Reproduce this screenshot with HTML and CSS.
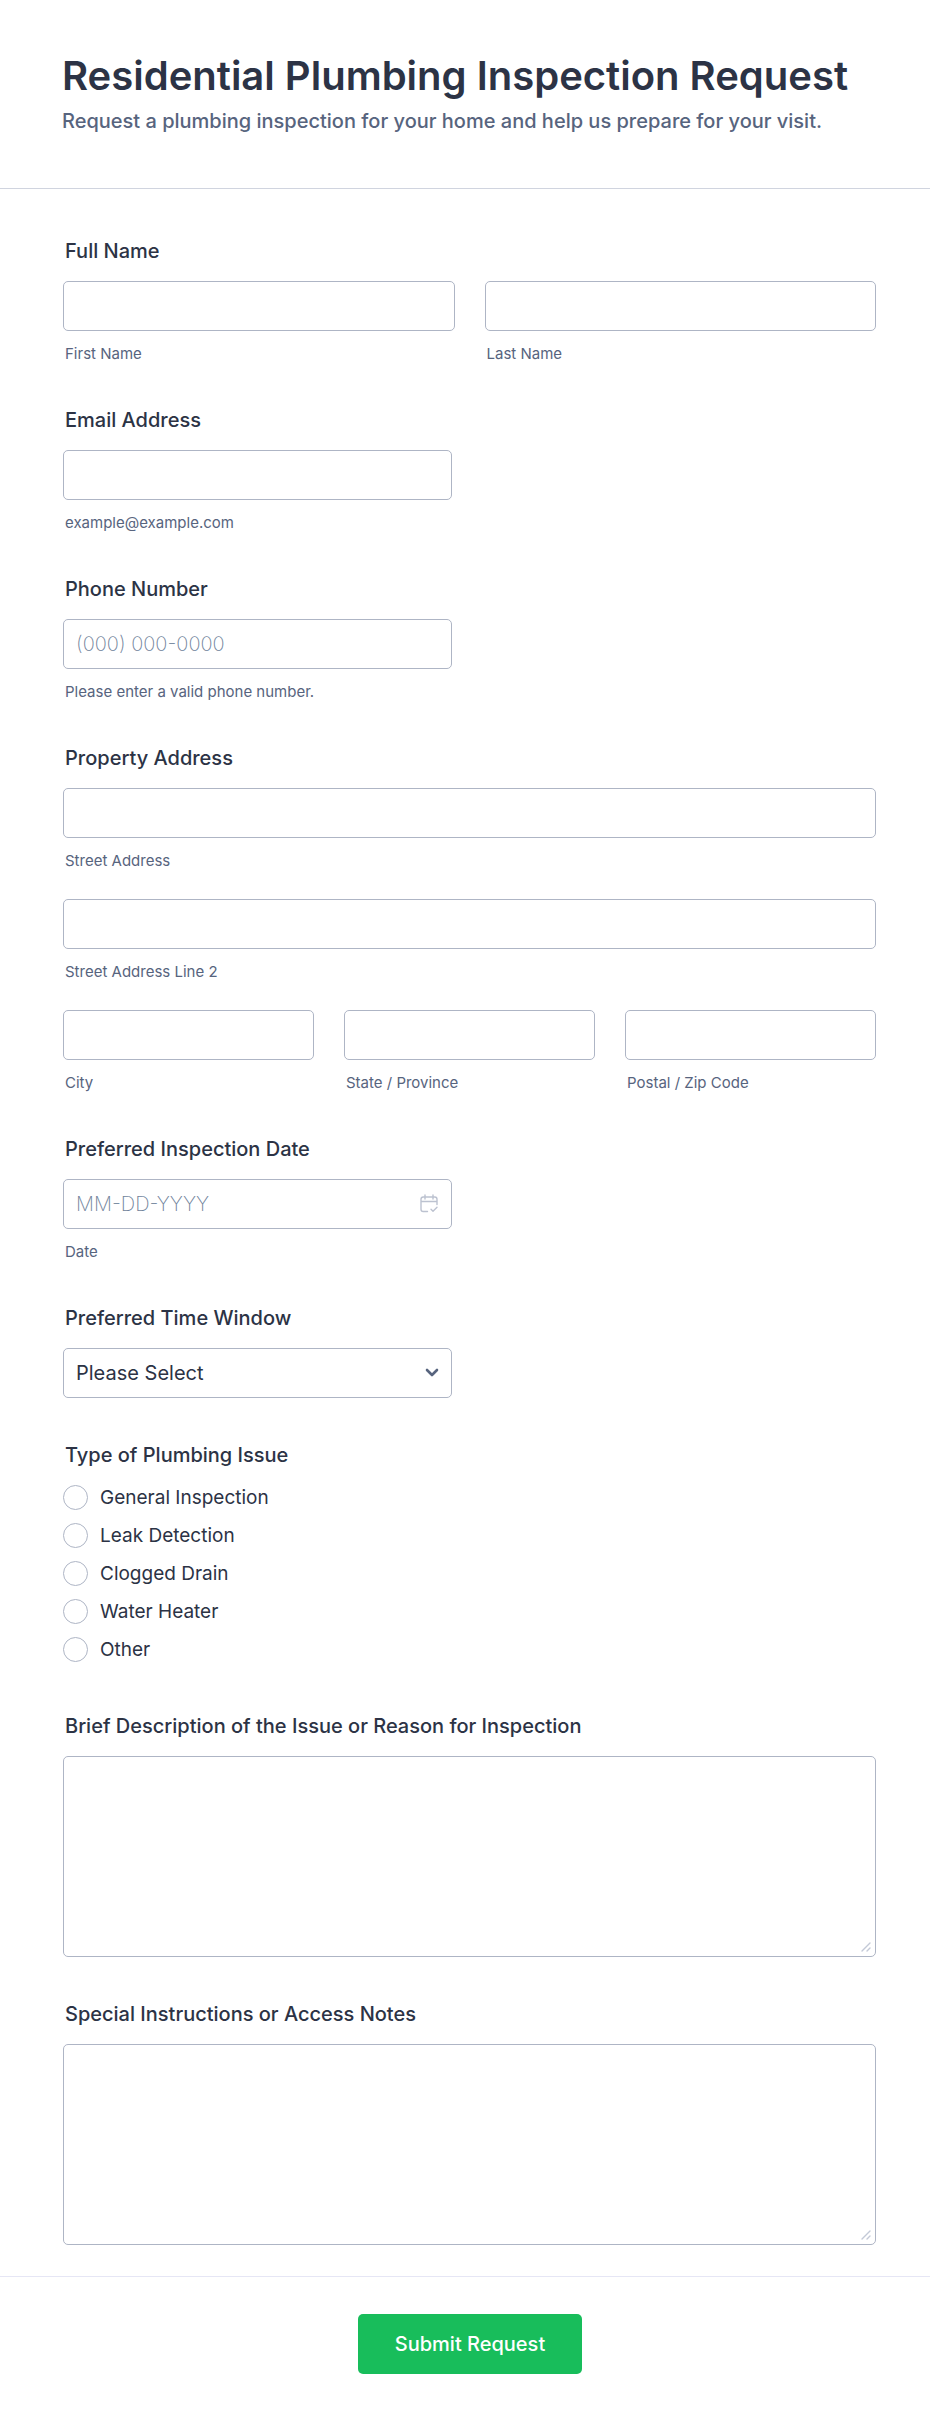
FILE: index.html
```html
<!DOCTYPE html>
<html lang="en">
<head>
<meta charset="utf-8">
<meta name="viewport" content="width=device-width, initial-scale=1">
<title>Residential Plumbing Inspection Request</title>
<link rel="stylesheet" href="styles.css">
</head>
<body>
<form class="form">
  <header class="form-header">
    <h1 class="title">Residential Plumbing Inspection Request</h1>
    <p class="subtitle">Request a plumbing inspection for your home and help us prepare for your visit.</p>
  </header>

  <div class="fields">
    <fieldset class="field">
      <legend class="label">Full Name</legend>
      <div class="row">
        <div class="cell"><input class="control" type="text" id="first"><label class="sublabel" for="first">First Name</label></div>
        <div class="cell"><input class="control" type="text" id="last"><label class="sublabel" for="last">Last Name</label></div>
      </div>
    </fieldset>

    <div class="field">
      <label class="label" for="email">Email Address</label>
      <div class="cell half"><input class="control" type="email" id="email" aria-describedby="email-hint"><span class="sublabel" id="email-hint">example@example.com</span></div>
    </div>

    <div class="field">
      <label class="label" for="phone">Phone Number</label>
      <div class="cell half"><input class="control" type="tel" id="phone" placeholder="(000) 000-0000" aria-describedby="phone-hint"><span class="sublabel" id="phone-hint">Please enter a valid phone number.</span></div>
    </div>

    <fieldset class="field">
      <legend class="label">Property Address</legend>
      <div class="rows">
        <div class="cell"><input class="control" type="text" id="street"><label class="sublabel" for="street">Street Address</label></div>
        <div class="cell"><input class="control" type="text" id="street2"><label class="sublabel" for="street2">Street Address Line 2</label></div>
        <div class="row">
          <div class="cell"><input class="control" type="text" id="city"><label class="sublabel" for="city">City</label></div>
          <div class="cell"><input class="control" type="text" id="state"><label class="sublabel" for="state">State / Province</label></div>
          <div class="cell"><input class="control" type="text" id="zip"><label class="sublabel" for="zip">Postal / Zip Code</label></div>
        </div>
      </div>
    </fieldset>

    <div class="field">
      <label class="label" for="date">Preferred Inspection Date</label>
      <div class="cell half">
        <div class="adorned">
          <input class="control" type="text" id="date" placeholder="MM-DD-YYYY" aria-describedby="date-hint">
          <svg class="adornment calendar" viewBox="0 0 18 19" aria-hidden="true"><path d="M7.5 17.5H3.2Q1 17.5 1 15.3V5.2Q1 3 3.2 3H14.8Q17 3 17 5.2V10.5M1 7.5H17M5 1V5M13 1V5M11 15.2L13 17.2L17 13.2"/></svg>
        </div>
        <span class="sublabel" id="date-hint">Date</span>
      </div>
    </div>

    <div class="field">
      <label class="label" for="time">Preferred Time Window</label>
      <div class="adorned half">
        <select class="control" id="time"><option>Please Select</option></select>
        <svg class="adornment chevron" viewBox="0 0 14 10" aria-hidden="true"><path d="M2 2L7 7L12 2"/></svg>
      </div>
    </div>

    <fieldset class="field">
      <legend class="label">Type of Plumbing Issue</legend>
      <div class="options">
        <label class="option"><input class="radio" type="radio" name="issue">General Inspection</label>
        <label class="option"><input class="radio" type="radio" name="issue">Leak Detection</label>
        <label class="option"><input class="radio" type="radio" name="issue">Clogged Drain</label>
        <label class="option"><input class="radio" type="radio" name="issue">Water Heater</label>
        <label class="option"><input class="radio" type="radio" name="issue">Other</label>
      </div>
    </fieldset>

    <div class="field">
      <label class="label" for="description">Brief Description of the Issue or Reason for Inspection</label>
      <div class="adorned">
        <textarea class="control area" id="description"></textarea>
        <svg class="adornment grip" viewBox="0 0 10 10" aria-hidden="true"><path d="M1 9L9 1M6 9L9 6"/></svg>
      </div>
    </div>

    <div class="field">
      <label class="label" for="notes">Special Instructions or Access Notes</label>
      <div class="adorned">
        <textarea class="control area" id="notes"></textarea>
        <svg class="adornment grip" viewBox="0 0 10 10" aria-hidden="true"><path d="M1 9L9 1M6 9L9 6"/></svg>
      </div>
    </div>
  </div>

  <footer class="form-footer"><button class="submit" type="submit">Submit Request</button></footer>
</form>
</body>
</html>
```
FILE: styles.css
```css
*, *::before, *::after { box-sizing: border-box; }

body {
  margin: 0;
  background: #fff;
  color: #2c3345;
  font-family: Inter, "Liberation Sans", sans-serif;
}

.form-header {
  padding: 52px 54px 55px 62px;
  border-bottom: 1px solid #d0d4df;
}

.title { margin: 0; font-size: 40px; line-height: 48px; font-weight: 600; }

.subtitle {
  margin: 9px 0 0;
  color: #57647e;
  font-size: 20px;
  line-height: 24px;
  font-weight: 500;
}

.fields {
  display: flex;
  flex-direction: column;
  gap: 45px;
  padding: 50px 54px 31px 63px;
}

.field { min-width: 0; margin: 0; padding: 0; border: 0; }

.label {
  display: block;
  margin-bottom: 18px;
  padding: 0 2px;
  font-size: 20px;
  line-height: 24px;
  font-weight: 500;
}

.rows { display: flex; flex-direction: column; gap: 29px; }
.row { display: flex; gap: 30px; }
.cell { flex: 1; min-width: 0; }
.half { max-width: 389px; }

.control {
  display: block;
  width: 100%;
  height: 50px;
  padding: 0 12px;
  border: 1px solid #aeb5c5;
  border-radius: 5px;
  background: #fff;
  color: #2c3345;
  font: 400 20px/24px Inter, "Liberation Sans", sans-serif;
  appearance: none;
}

.control::placeholder { color: #70839b; font-weight: 200; opacity: 1; }
.area { height: 201px; padding: 12px; resize: vertical; }
.area::-webkit-resizer { display: none; }

.sublabel {
  display: block;
  margin-top: 14px;
  padding: 0 2px;
  color: #57647e;
  font-size: 15px;
  line-height: 18px;
}

.adorned { position: relative; }
.adornment { position: absolute; pointer-events: none; fill: none; stroke-linecap: round; stroke-linejoin: round; }
.calendar { top: 15px; right: 14px; width: 18px; height: 19px; stroke: #bcc2d0; stroke-width: 1.4; }
.chevron { top: 20px; right: 13px; width: 14px; height: 10px; stroke: #57647e; stroke-width: 2.6; }
.grip { right: 5px; bottom: 5px; width: 10px; height: 10px; stroke: #c3c9d7; stroke-width: 1.4; }

.options { display: flex; flex-direction: column; align-items: flex-start; gap: 13px; padding-bottom: 7px; }
.option { display: flex; align-items: center; gap: 12px; font-size: 19px; line-height: 25px; }
.radio {
  width: 25px;
  height: 25px;
  margin: 0;
  border: 1px solid #aeb5c5;
  border-radius: 50%;
  background: #fff;
  appearance: none;
}
.radio:checked { border: 7px solid #18bd5b; }

.form-footer {
  display: flex;
  justify-content: center;
  padding: 37px 53px 49px 63px;
  border-top: 1px solid #e6e6f5;
}

.submit {
  min-width: 224px;
  height: 60px;
  padding: 0 35px;
  border: 0;
  border-radius: 5px;
  background: #18bd5b;
  color: #fff;
  font: 500 20px/24px Inter, "Liberation Sans", sans-serif;
}
```
